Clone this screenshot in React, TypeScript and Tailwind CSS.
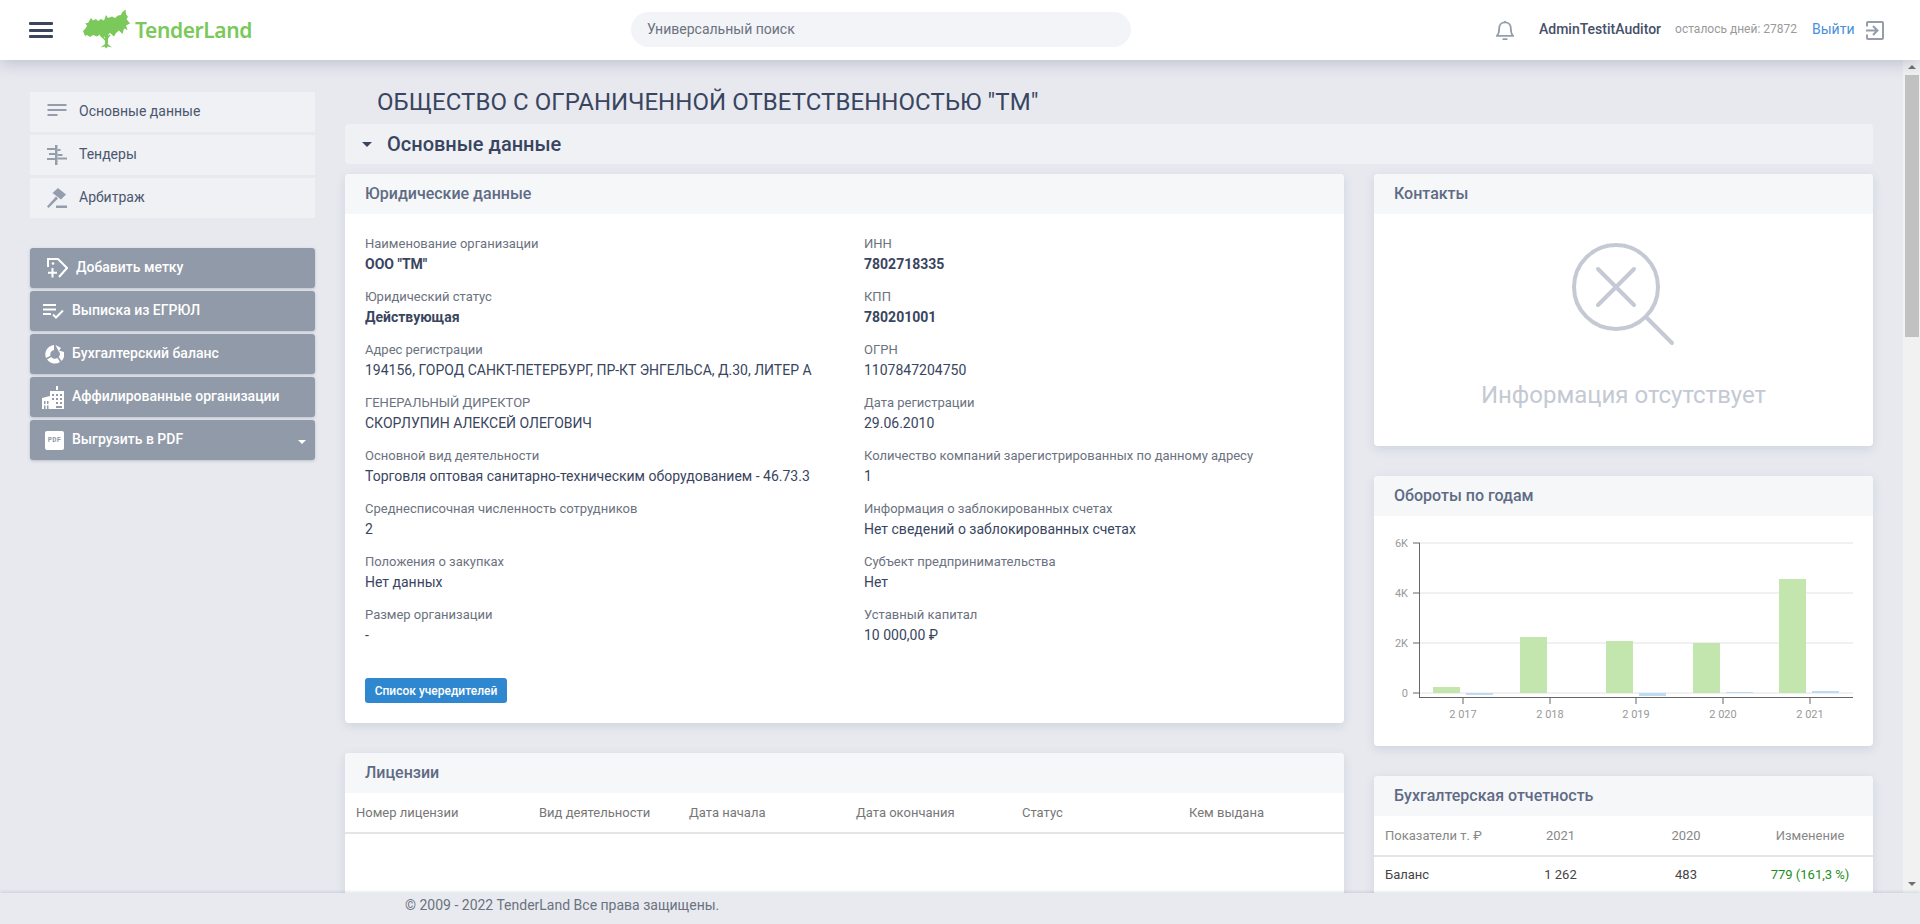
import React from "react";

// ── Data ───────────────────────────────────────────────────────────────────
const FIELDS: { label: string; value: string; bold?: boolean }[] = [
  { label: "Наименование организации", value: 'ООО "ТМ"', bold: true },
  { label: "ИНН", value: "7802718335", bold: true },
  { label: "Юридический статус", value: "Действующая", bold: true },
  { label: "КПП", value: "780201001", bold: true },
  { label: "Адрес регистрации", value: "194156, ГОРОД САНКТ-ПЕТЕРБУРГ, ПР-КТ ЭНГЕЛЬСА, Д.30, ЛИТЕР А" },
  { label: "ОГРН", value: "1107847204750" },
  { label: "ГЕНЕРАЛЬНЫЙ ДИРЕКТОР", value: "СКОРЛУПИН АЛЕКСЕЙ ОЛЕГОВИЧ" },
  { label: "Дата регистрации", value: "29.06.2010" },
  { label: "Основной вид деятельности", value: "Торговля оптовая санитарно-техническим оборудованием - 46.73.3" },
  { label: "Количество компаний зарегистрированных по данному адресу", value: "1" },
  { label: "Среднесписочная численность сотрудников", value: "2" },
  { label: "Информация о заблокированных счетах", value: "Нет сведений о заблокированных счетах" },
  { label: "Положения о закупках", value: "Нет данных" },
  { label: "Субъект предпринимательства", value: "Нет" },
  { label: "Размер организации", value: "-" },
  { label: "Уставный капитал", value: "10 000,00 ₽" },
];

const LICENSE_COLS = ["Номер лицензии", "Вид деятельности", "Дата начала", "Дата окончания", "Статус", "Кем выдана"];

// x of the green bar, its top, then x of the blue bar with its y range
const BARS = [
  { tick: 1463, year: "2 017", gx: 1433, gy: 687, bx: 1466, by: 693, bh: 2 },
  { tick: 1550, year: "2 018", gx: 1520, gy: 637, bx: 1553, by: 693, bh: 0 },
  { tick: 1636, year: "2 019", gx: 1606, gy: 641, bx: 1639, by: 693, bh: 3 },
  { tick: 1723, year: "2 020", gx: 1693, gy: 643, bx: 1726, by: 692, bh: 1 },
  { tick: 1810, year: "2 021", gx: 1779, gy: 579, bx: 1812, by: 691, bh: 2 },
];

// ── Icons ──────────────────────────────────────────────────────────────────
function Logo() {
  return (
    <svg width="48" height="40" viewBox="83 9 48 40" className="shrink-0" fill="#7ac95a">
      <polygon points="83,31 85,29 87,26 85.5,23 88,23 91,18 93,20.5 96,19 98,21 101,19 104,20.5 106,15 108,18 112,16.5 115,18 118,15.5 121,15 122,12.5 125.5,9.5 126,14 128,17 126.5,19 130,23.5 126,25.5 127.5,30 124,28.5 122.5,34 119,30.5 116,33 114,36.5 110,33 107,35.5 103,37.5 100,34.5 97,36.5 93,35 90,37 87,35 85,36" />
      <path d="M104.5 33 L108.5 33 L107.8 44 L112 47.5 L108 46.5 L106 48.5 L104.5 46.5 L100.5 47.5 L105 44 Z" />
      <path d="M100 35 L105.5 40 L110 35" fill="none" stroke="#7ac95a" strokeWidth="1.5" />
    </svg>
  );
}

function LinesIcon() {
  return (
    <svg width="20" height="12" viewBox="0 0 20 12" fill="#959dac" className="mb-[4px]">
      <rect x="0.5" y="0" width="19" height="2" />
      <rect x="0.5" y="5" width="19" height="2" />
      <rect x="0.5" y="10" width="10" height="2" />
    </svg>
  );
}

function TenderIcon() {
  return (
    <svg width="20" height="20" viewBox="0 0 20 20" fill="#959dac">
      <rect x="8" y="0" width="2.5" height="20" />
      <rect x="0" y="3" width="8" height="2" />
      <rect x="2" y="8" width="6" height="2" />
      <rect x="0" y="13" width="8" height="2" />
      <rect x="10.5" y="4" width="3" height="2" />
      <rect x="10.5" y="9" width="5" height="2" />
      <rect x="10.5" y="12.5" width="9.5" height="2" />
    </svg>
  );
}

function GavelIcon() {
  return (
    <svg width="20" height="20" viewBox="0 0 20 20" fill="#959dac">
      <polygon points="5.5,5 11,0 19,6.5 14,11.5" />
      <polygon points="0,18.5 9,8.5 11,10.5 1.5,20" />
      <rect x="9" y="17.5" width="11" height="2.5" />
    </svg>
  );
}

function TagPlusIcon() {
  return (
    <svg width="21" height="20" viewBox="0 0 21 20" fill="none" stroke="#fff" strokeWidth="2" className="shrink-0">
      <path d="M1 9 V1 H11 L20 10 L12 19" />
      <circle cx="6" cy="5.5" r="1.3" fill="#fff" stroke="none" />
      <path d="M5.5 10 V19.5 M1 14.8 H10" />
    </svg>
  );
}

function ListCheckIcon() {
  return (
    <svg width="21" height="15" viewBox="0 0 21 15" fill="none" stroke="#fff" strokeWidth="1.8">
      <path d="M0 1 H13 M0 5.5 H13 M0 10 H8" />
      <path d="M10 10.5 L13 13.5 L20 6.5" strokeWidth="2" />
    </svg>
  );
}

function ChartPieIcon() {
  return (
    <svg width="19" height="19" viewBox="0 0 19 19" fill="#fff">
      <path d="M9 0 A9.5 9.5 0 0 0 1 13 L5.5 10.8 A4.5 4.5 0 0 1 9 5 Z" />
      <path d="M2 14.5 A9.5 9.5 0 0 0 15 17 L12.5 13 A4.5 4.5 0 0 1 6.3 12 Z" />
      <path d="M10.5 0 L16 3 L14 5.5 L19 7 A9.5 9.5 0 0 1 16.5 16 L13.8 12 A4.5 4.5 0 0 0 13.5 6 Z" />
    </svg>
  );
}

function BuildingIcon() {
  return (
    <svg width="24" height="23" viewBox="0 0 24 23" fill="#fff" className="shrink-0">
      <rect x="14" y="0" width="2" height="4" />
      <path d="M8 5 H22 V23 H8 Z M10 8 V10 H12 V8 Z M14 8 V10 H16 V8 Z M18 8 V10 H20 V8 Z M10 12 V14 H12 V12 Z M14 12 V14 H16 V12 Z M18 12 V14 H20 V12 Z M14 16 V18 H16 V16 Z M18 16 V18 H20 V16 Z M14 20 V22 H20 V20 Z" fillRule="evenodd" />
      <path d="M0 12 L8 10 V23 H0 Z M2 15 V18 H3.5 V15 Z M5 15 V18 H6.5 V15 Z M2 19.5 V23 H3.5 V19.5 Z M5 19.5 V23 H6.5 V19.5 Z" fillRule="evenodd" />
    </svg>
  );
}

function PdfIcon() {
  return (
    <div className="flex h-[19px] w-[19px] items-center justify-center rounded-[2px] bg-white text-[7px] font-bold leading-none tracking-[0.3px] text-[#919aa8] font-['Liberation_Mono',monospace]">
      PDF
    </div>
  );
}

function BellIcon() {
  return (
    <svg width="18" height="21" viewBox="0 0 20 22" fill="none" stroke="#959dac" strokeWidth="2">
      <path d="M1 17 C3 15 3.5 13 3.5 9 C3.5 5 6 2 10 2 C14 2 16.5 5 16.5 9 C16.5 13 17 15 19 17 Z" />
      <path d="M10 0.5 V2" />
      <path d="M8 20.5 H12" strokeLinecap="round" />
    </svg>
  );
}

function ExitIcon() {
  return (
    <svg width="19" height="19" viewBox="0 0 19 19" fill="none" stroke="#959dac" strokeWidth="2">
      <path d="M2 5.5 V2 Q2 1 3 1 H17 Q18 1 18 2 V17 Q18 18 17 18 H3 Q2 18 2 17 V13.5" />
      <path d="M1 9.5 H12 M8 5 L12.5 9.5 L8 14" />
    </svg>
  );
}

function NotFoundIcon() {
  return (
    <svg width="105" height="105" viewBox="0 0 105 105" fill="none" stroke="#c4c9d3" strokeWidth="4" strokeLinecap="round">
      <circle cx="45" cy="45" r="42" />
      <path d="M27 27 L63 63 M63 27 L27 63" />
      <path d="M76 76 L101 101" />
    </svg>
  );
}

function Caret({ className }: { className: string }) {
  return <span className={`inline-block h-0 w-0 border-x-transparent ${className}`} />;
}

// ── Parts ──────────────────────────────────────────────────────────────────
function Card({ title, children, className }: { title: string; children: React.ReactNode; className: string }) {
  return (
    <section className={`overflow-hidden rounded-[4px] bg-white shadow-[0_3px_10px_rgba(90,100,130,0.16)] ${className}`}>
      <h3 className="h-10 bg-[#f6f7f9] pl-5 text-base font-medium leading-10 text-[#5f6b85]">{title}</h3>
      {children}
    </section>
  );
}

function SideItem({ icon, label }: { icon: React.ReactNode; label: string }) {
  return (
    <div className="flex h-10 items-center bg-[#eff1f5] text-sm text-[#4c566e]">
      <div className="flex w-[37px] justify-end">{icon}</div>
      <span className="mb-[2px] ml-[12px]">{label}</span>
    </div>
  );
}

function SideButton({ icon, label, iconBox, caret }: { icon: React.ReactNode; label: string; iconBox: string; caret?: boolean }) {
  return (
    <div className="flex h-10 items-center rounded-[3px] bg-[#919aa8] text-sm font-medium text-white shadow-[0_1px_3px_rgba(60,70,90,0.25)]">
      <div className={`flex shrink-0 items-center ${iconBox}`}>{icon}</div>
      <span className="mb-[2px] ml-[8px]">{label}</span>
      {caret && <Caret className="ml-auto mr-[9px] mt-[3px] border-x-4 border-t-4 border-t-white" />}
    </div>
  );
}

function Chart() {
  const grid = [
    { y: 543, t: "6K" },
    { y: 593, t: "4K" },
    { y: 643, t: "2K" },
    { y: 693, t: "0" },
  ];
  return (
    <svg width="499" height="230" viewBox="1374 516 499 230" className="block font-[Roboto,sans-serif]">
      {grid.map((g) => (
        <g key={g.t}>
          <line x1="1420" x2="1853" y1={g.y} y2={g.y} stroke="#e2e2e2" strokeWidth="1" />
          <line x1="1413" x2="1420" y1={g.y} y2={g.y} stroke="#666" strokeWidth="1" />
          <text x="1408" y={g.y + 4} textAnchor="end" fontSize="11" fill="#999">{g.t}</text>
        </g>
      ))}
      {BARS.map((b) => (
        <g key={b.year}>
          <rect x={b.gx} y={b.gy} width="27" height={693 - b.gy} fill="#c3e5ae" />
          <rect x={b.bx} y={b.by} width="27" height={b.bh} fill="#bddcf3" />
          <line x1={b.tick} x2={b.tick} y1="697" y2="704" stroke="#666" strokeWidth="1" />
          <text x={b.tick} y="718" textAnchor="middle" fontSize="11" fill="#999">{b.year}</text>
        </g>
      ))}
      <line x1="1419.5" x2="1419.5" y1="543" y2="697.5" stroke="#666" strokeWidth="1" />
      <line x1="1419" x2="1853" y1="697.5" y2="697.5" stroke="#666" strokeWidth="1" />
    </svg>
  );
}

function ScrollBar() {
  return (
    <div className="flex w-[17px] shrink-0 flex-col items-center bg-[#f1f1f1]">
      <span className="mt-[5px] h-0 w-0 border-x-4 border-b-4 border-x-transparent border-b-[#6f6f6f]" />
      <div className="ml-[1px] mt-[6px] h-[262px] w-[14px] bg-[#c1c1c1]" />
      <span className="mb-[7px] mt-auto h-0 w-0 border-x-4 border-t-4 border-x-transparent border-t-[#6f6f6f]" />
    </div>
  );
}

// ── Page ───────────────────────────────────────────────────────────────────
export default function App() {
  return (
    <div className="flex h-screen flex-col overflow-hidden bg-[#e7e9ef] font-[Roboto,sans-serif] text-[#394560]">
      <header className="relative z-10 flex h-[60px] shrink-0 items-center bg-white shadow-[0_4px_14px_rgba(90,100,130,0.28)]">
        <div className="flex w-[631px] shrink-0 items-center">
          <div className="ml-[29px] flex h-[16px] w-6 flex-col justify-between">
            <span className="h-[3px] rounded-[1px] bg-[#3a4660]" />
            <span className="h-[3px] rounded-[1px] bg-[#3a4660]" />
            <span className="h-[3px] rounded-[1px] bg-[#3a4660]" />
          </div>
          <div className="ml-[30px] mt-[-2px]">
            <Logo />
          </div>
          <span className="ml-[4px] text-[21px] font-semibold leading-none tracking-[-0.4px] text-[#7ac95a] font-['Noto_Sans',sans-serif]">
            TenderLand
          </span>
        </div>
        <div className="mb-[1px] flex h-[35px] w-[500px] shrink-0 items-center rounded-full bg-[#f2f4f7] pb-[1px] pl-4 text-sm text-[#6b7280]">
          Универсальный поиск
        </div>
        <div className="ml-[365px] flex items-center">
          <BellIcon />
          <span className="mb-[2px] ml-[25px] text-sm font-medium text-[#465069]">AdminTestitAuditor</span>
          <span className="mb-[2px] ml-[14px] text-xs text-[#9a9a9a]">осталось дней: 27872</span>
          <span className="mb-[2px] ml-[15px] text-sm text-[#4a90d9]">Выйти</span>
          <span className="ml-[10px]">
            <ExitIcon />
          </span>
        </div>
      </header>

      <div className="flex min-h-0 flex-1">
        <main className="min-w-0 flex-1 overflow-hidden">
          <div className="flex pl-[30px]">
            <aside className="mt-8 w-[285px] shrink-0">
              <div className="flex flex-col gap-[3px]">
                <SideItem icon={<LinesIcon />} label="Основные данные" />
                <SideItem icon={<TenderIcon />} label="Тендеры" />
                <SideItem icon={<GavelIcon />} label="Арбитраж" />
              </div>
              <div className="mt-[30px] flex flex-col gap-[3px]">
                <SideButton icon={<TagPlusIcon />} label="Добавить метку" iconBox="w-[38px] justify-end" />
                <SideButton icon={<ListCheckIcon />} label="Выписка из ЕГРЮЛ" iconBox="w-[34px] justify-end" />
                <SideButton icon={<ChartPieIcon />} label="Бухгалтерский баланс" iconBox="w-[34px] justify-end" />
                <SideButton icon={<BuildingIcon />} label="Аффилированные организации" iconBox="w-[34px] justify-start pl-[12px]" />
                <SideButton icon={<PdfIcon />} label="Выгрузить в PDF" iconBox="w-[34px] justify-end" caret />
              </div>
            </aside>

            <div className="ml-[30px] w-[1528px] shrink-0">
              <h1 className="h-16 pl-8 pt-5 text-2xl leading-[44px] tracking-[0.05px] text-[#394560]">
                ОБЩЕСТВО С ОГРАНИЧЕННОЙ ОТВЕТСТВЕННОСТЬЮ "ТМ"
              </h1>
              <div className="flex h-10 items-center rounded-[4px] bg-[#eff1f5]">
                <Caret className="ml-[17px] border-x-[5px] border-t-[5px] border-t-[#394560]" />
                <h2 className="ml-[15px] text-xl font-medium">Основные данные</h2>
              </div>

              <div className="mt-[10px] flex gap-[30px]">
                <div className="flex w-[999px] flex-col gap-[30px]">
                  <Card title="Юридические данные" className="h-[549px]">
                    <div className="grid grid-cols-[499px_1fr] gap-y-[13px] pl-5 pt-5">
                      {FIELDS.map((f) => (
                        <div key={f.label}>
                          <div className="text-[13px] leading-5 text-[#6b7280]">{f.label}</div>
                          <div className={`text-sm leading-5 ${f.bold ? "font-bold" : ""}`}>{f.value}</div>
                        </div>
                      ))}
                    </div>
                    <button className="ml-5 mt-[33px] h-[25px] w-[142px] rounded-[3px] bg-[#2f87d0] text-xs font-medium text-white">
                      Список учередителей
                    </button>
                  </Card>

                  <Card title="Лицензии" className="h-[420px]">
                    <div className="grid h-[41px] grid-cols-[183px_150px_167px_166px_167px_1fr] items-center border-b-2 border-[#e3e5e8] pl-[11px] text-[13px] text-[#777]">
                      {LICENSE_COLS.map((c) => (
                        <span key={c}>{c}</span>
                      ))}
                    </div>
                  </Card>
                </div>

                <div className="flex w-[499px] flex-col gap-[30px]">
                  <Card title="Контакты" className="h-[272px]">
                    <div className="flex flex-col items-center">
                      <div className="mt-[28px]">
                        <NotFoundIcon />
                      </div>
                      <div className="mt-[34px] text-2xl leading-7 text-[#c4c9d3]">Информация отсутствует</div>
                    </div>
                  </Card>

                  <Card title="Обороты по годам" className="h-[270px]">
                    <Chart />
                  </Card>

                  <Card title="Бухгалтерская отчетность" className="h-[400px]">
                    <div className="grid h-[41px] grid-cols-[126px_121px_130px_1fr] items-center border-b-2 border-[#e3e5e8] pr-1 text-center text-[13px] text-[#888]">
                      <span className="pl-[11px] text-left">Показатели т. ₽</span>
                      <span>2021</span>
                      <span>2020</span>
                      <span>Изменение</span>
                    </div>
                    <div className="grid h-9 grid-cols-[126px_121px_130px_1fr] items-center pr-1 text-center text-[13px] text-[#444]">
                      <span className="pl-[11px] text-left">Баланс</span>
                      <span>1 262</span>
                      <span>483</span>
                      <span className="text-[#1a8f1a]">779 (161,3 %)</span>
                    </div>
                  </Card>
                </div>
              </div>
            </div>
          </div>
        </main>
        <ScrollBar />
      </div>

      <footer className="relative z-10 h-[31px] shrink-0 bg-[#e8eaef] pl-[405px] pt-[2px] text-sm leading-5 text-[#6b7280] shadow-[0_-1px_3px_rgba(90,100,130,0.2)]">
        © 2009 - 2022 TenderLand Все права защищены.
      </footer>
    </div>
  );
}
